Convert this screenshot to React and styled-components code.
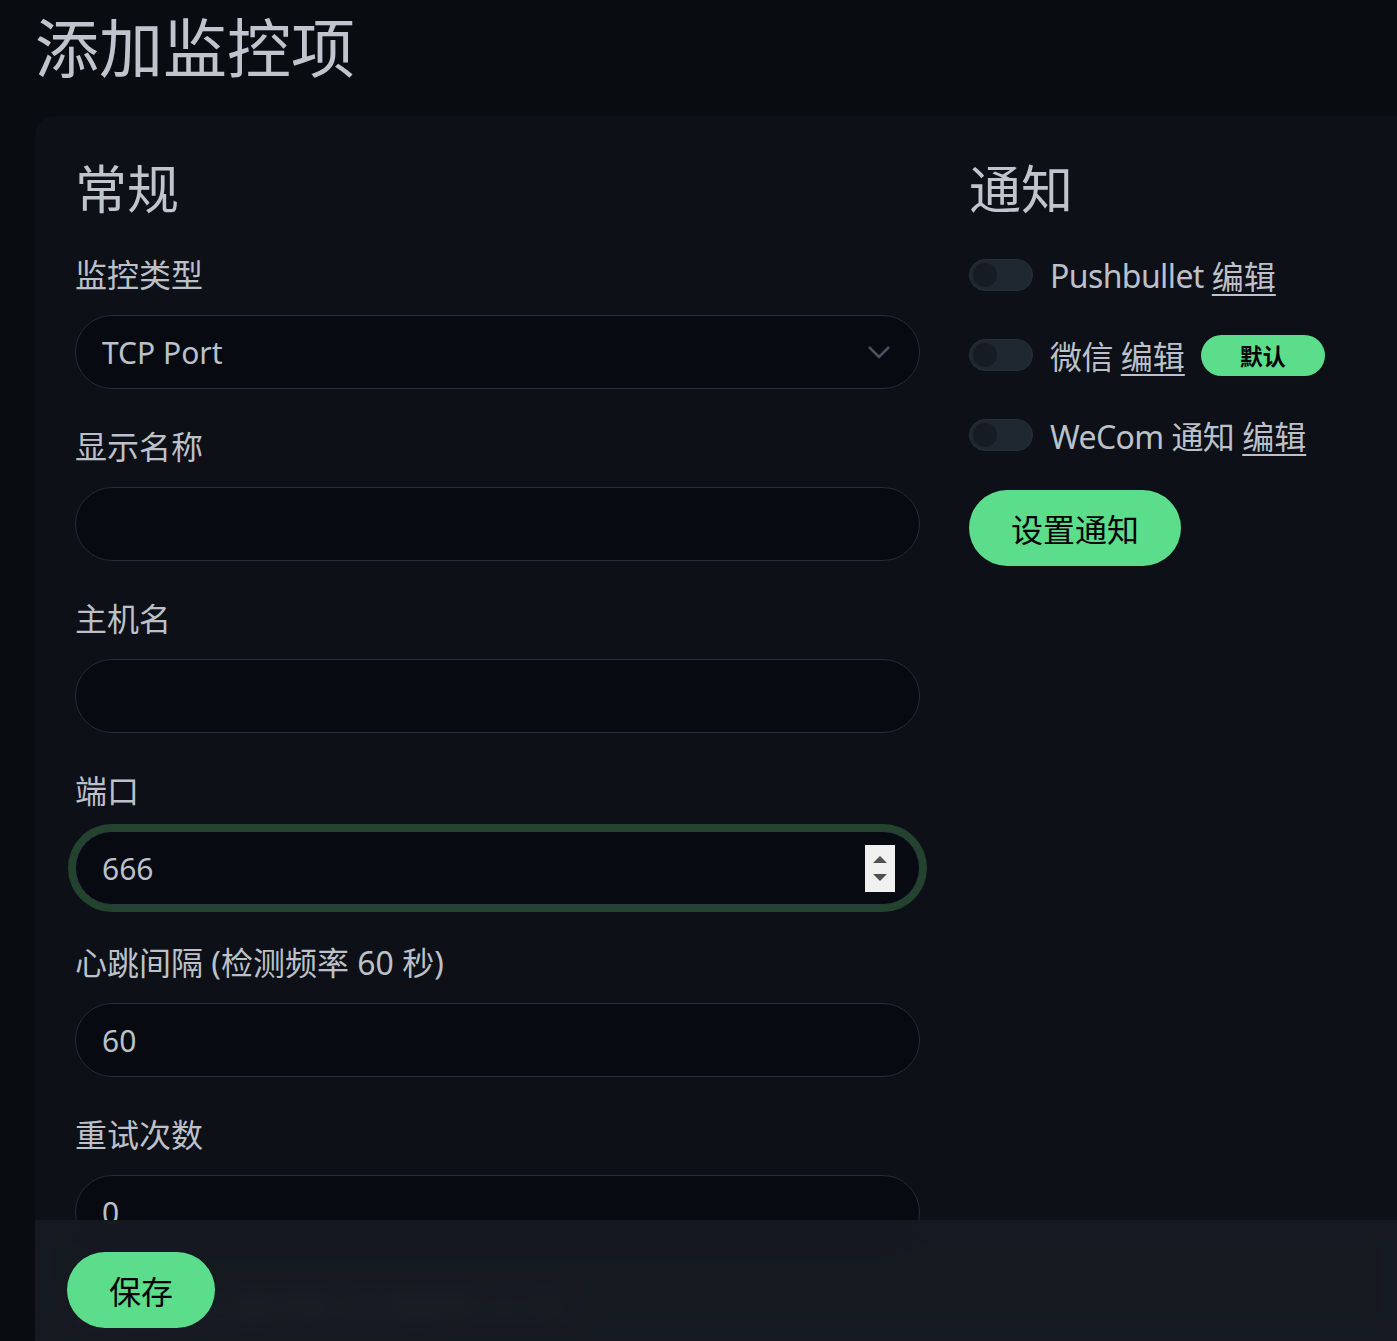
import styled, { createGlobalStyle, css } from "styled-components";

const GlobalStyle = createGlobalStyle`
  html, body {
    margin: 0;
    background: #090c10;
  }
  body {
    font-family: "Noto Sans", "Noto Sans CJK SC", sans-serif;
    color: #bcc1c9;
    overflow: hidden;
  }
`;

const Page = styled.div`
  padding: 6px 0 0 35px;
  min-height: 100vh;
  box-sizing: border-box;
  overflow: hidden;
`;

const Title = styled.h1`
  margin: 0 0 33px 0;
  font-size: 64px;
  line-height: 1.2;
  font-weight: 400;
  color: #c0c5cd;
  font-family: "Noto Sans CJK SC", sans-serif;
`;

const Card = styled.div`
  background: #0d1017;
  border-radius: 20px 0 0 20px;
  padding: 40px 40px 200px 40px;
  width: 1400px;
  box-sizing: border-box;
`;

const Columns = styled.div`
  display: grid;
  grid-template-columns: 845px 1fr;
  column-gap: 49px;
`;

const Column = styled.div`
  display: flex;
  flex-direction: column;
`;

const Heading = styled.h2`
  margin: 0 0 33px 0;
  font-size: 52px;
  line-height: 1.2;
  font-weight: 400;
  color: #c0c5cd;
  font-family: "Noto Sans CJK SC", sans-serif;
`;

const Field = styled.div`
  margin-bottom: 34px;
`;

const Label = styled.label`
  display: block;
  font-size: 32px;
  line-height: 48px;
  margin-bottom: 16px;
`;

const InputBox = styled.div`
  position: relative;
  height: 74px;
  box-sizing: border-box;
  border-radius: 37px;
  background: #070a10;
  border: 1px solid #252c35;
  display: flex;
  align-items: center;
  padding: 0 26px;
  font-size: 30px;
  color: #bcc1c9;
  ${({ focused }) =>
    focused &&
    css`
      border-color: #2a3a42;
      box-shadow: 0 0 0 7px #23432f;
    `}
`;

const Chevron = styled.svg`
  position: absolute;
  right: 28px;
  top: 50%;
  margin-top: -7px;
`;

const Spinner = styled.div`
  position: absolute;
  right: 24px;
  top: 13px;
  width: 30px;
  height: 47px;
  background: #f0f0f0;
  display: flex;
  flex-direction: column;
  align-items: center;
  justify-content: space-around;
  padding: 6px 0;
  box-sizing: border-box;
`;

const Arrow = styled.div`
  width: 0;
  height: 0;
  border-left: 7px solid transparent;
  border-right: 7px solid transparent;
  ${({ down }) =>
    down
      ? css`
          border-top: 7px solid #505050;
        `
      : css`
          border-bottom: 7px solid #505050;
        `}
`;

const NotifyRow = styled.div`
  display: flex;
  align-items: center;
  height: 48px;
  margin-bottom: 32px;
  font-size: 32px;
`;

const Toggle = styled.div`
  width: 64px;
  height: 32px;
  box-sizing: border-box;
  border-radius: 16px;
  background: #1f2731;
  border: 1px solid #27303a;
  display: flex;
  align-items: center;
  padding-left: 3px;
  margin-right: 17px;
  flex-shrink: 0;

  &::before {
    content: "";
    width: 24px;
    height: 24px;
    border-radius: 50%;
    background: #161c24;
  }
`;

const Latin = styled.span`
  letter-spacing: -0.6px;
`;

const EditLink = styled.a`
  color: #bcc1c9;
  text-decoration: underline;
  text-underline-offset: 5px;
  text-decoration-thickness: 2px;
  margin-left: 8px;
`;

const Badge = styled.span`
  margin-left: 16px;
  width: 124px;
  height: 41px;
  border-radius: 21px;
  background: #5cdd8b;
  color: #000;
  font-size: 23px;
  font-weight: 700;
  display: flex;
  align-items: center;
  justify-content: center;
  font-family: "Noto Sans CJK SC", sans-serif;
`;

const GreenButton = styled.button`
  background: #5cdd8b;
  color: #000;
  border: none;
  font-family: "Noto Sans CJK SC", sans-serif;
  font-size: 32px;
  border-radius: 38px;
  height: 76px;
  width: ${({ wide }) => (wide ? "212px" : "148px")};
  padding: 0;
  cursor: pointer;
`;

const SetupWrap = styled.div`
  margin-top: -1px;
`;

const Footer = styled.div`
  position: fixed;
  left: 35px;
  right: 0;
  bottom: 0;
  height: 121px;
  box-sizing: border-box;
  padding: 32px 0 0 32px;
  background: rgba(22, 26, 33, 0.94);
  backdrop-filter: blur(12px);
`;

const fields = [
  { label: "监控类型", value: "TCP Port", select: true },
  { label: "显示名称", value: "" },
  { label: "主机名", value: "" },
  { label: "端口", value: "666", focused: true },
  { label: "心跳间隔 (检测频率 60 秒)", value: "60" },
  { label: "重试次数", value: "0" },
  { label: "重试前的心跳间隔 (检测频率 60 秒)", value: "60" },
];

const notifications = [
  { name: "Pushbullet" },
  { name: "微信", isDefault: true },
  { name: "WeCom 通知" },
];

export default function App() {
  return (
    <>
      <GlobalStyle />
      <Page>
        <Title>添加监控项</Title>
        <Card>
          <Columns>
            <Column>
              <Heading>常规</Heading>
              {fields.map((f) => (
                <Field key={f.label}>
                  <Label>{f.label}</Label>
                  <InputBox focused={f.focused}>
                    {f.value}
                    {f.select && (
                      <Chevron width="24" height="14" viewBox="0 0 24 14">
                        <path
                          d="M2 2 L12 12 L22 2"
                          fill="none"
                          stroke="#4b5361"
                          strokeWidth="2.5"
                        />
                      </Chevron>
                    )}
                    {f.focused && (
                      <Spinner>
                        <Arrow />
                        <Arrow down />
                      </Spinner>
                    )}
                  </InputBox>
                </Field>
              ))}
            </Column>
            <Column>
              <Heading>通知</Heading>
              {notifications.map((n) => (
                <NotifyRow key={n.name}>
                  <Toggle />
                  <Latin>{n.name}</Latin>
                  <EditLink>编辑</EditLink>
                  {n.isDefault && <Badge>默认</Badge>}
                </NotifyRow>
              ))}
              <SetupWrap>
                <GreenButton wide>设置通知</GreenButton>
              </SetupWrap>
            </Column>
          </Columns>
        </Card>
      </Page>
      <Footer>
        <GreenButton>保存</GreenButton>
      </Footer>
    </>
  );
}
